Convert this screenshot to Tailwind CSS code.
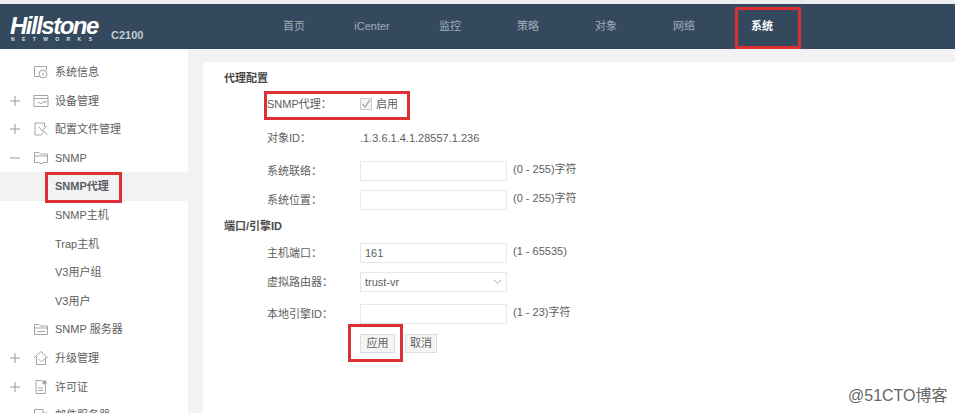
<!DOCTYPE html>
<html lang="zh-CN">
<head>
  <meta charset="UTF-8">
  <title>SNMP代理</title>
  <script src="https://cdn.jsdelivr.net/npm/@tailwindcss/browser@4"></script>
</head>
<body class="relative h-[413px] overflow-hidden bg-[#f2f2f5] text-[11px] text-[#5e5e5e] font-['Liberation_Sans','Noto_Sans_CJK_SC',sans-serif]">

  <!-- top bar -->
  <div class="h-[4px] bg-[#eceef0]"></div>
  <header class="flex h-[45px] bg-[#34495e] text-[#a0acb8]">
    <div class="w-[255px] shrink-0 relative">
      <div class="absolute left-[10px] top-[12px] text-[24px] leading-[19px] font-bold italic tracking-[-1.5px] text-white">Hillstone</div>
      <div class="absolute left-[11px] top-[32px] text-[5px] leading-[6px] font-bold tracking-[7.4px] text-[#dfe3e7]">NETWORKS</div>
      <div class="absolute left-[111px] top-[24px] text-[11px] leading-[14px] font-bold text-[#c5ccd3]">C2100</div>
    </div>
    <nav class="flex items-center">
      <span class="w-[78px] text-center">首页</span>
      <span class="w-[78px] text-center">iCenter</span>
      <span class="w-[78px] text-center">监控</span>
      <span class="w-[78px] text-center">策略</span>
      <span class="w-[78px] text-center">对象</span>
      <span class="w-[78px] text-center">网络</span>
      <span class="w-[78px] text-center font-bold text-white">系统</span>
    </nav>
  </header>

  <div class="flex h-[364px]">
    <!-- sidebar -->
    <aside class="w-[188px] shrink-0 bg-white pt-[9px]">
      <div class="flex h-[28.6px] items-center">
        <span class="w-[33px]"></span>
        <svg class="w-[16px] h-[14px] mr-[6px]" viewBox="0 0 16 14" fill="none" stroke="#a5a5a5"><path d="M13.5 5V1.5H1.5V11.5H6"/><circle cx="10" cy="9" r="4"/><path d="M10 8v3M10 6.5v.6"/></svg>
        <span>系统信息</span>
      </div>
      <div class="flex h-[28.6px] items-center">
        <svg class="ml-[10px] mr-[13px] h-[10px] w-[10px]" viewBox="0 0 10 10" stroke="#999"><path d="M0 5H10M5 0V10"/></svg>
        <svg class="w-[16px] h-[14px] mr-[6px]" viewBox="0 0 16 14" fill="none" stroke="#a5a5a5"><path d="M15 12.5H1V1.5H15V12.5zM1 4.5H15M5 8l3 2 3-3 1 2 2-2"/></svg>
        <span>设备管理</span>
      </div>
      <div class="flex h-[28.6px] items-center">
        <svg class="ml-[10px] mr-[13px] h-[10px] w-[10px]" viewBox="0 0 10 10" stroke="#999"><path d="M0 5H10M5 0V10"/></svg>
        <svg class="w-[16px] h-[14px] mr-[6px]" viewBox="0 0 16 14" fill="none" stroke="#a5a5a5"><path d="M11.5 5V1H2V13H8M6 5l3 4 5-5M8 13l3-4 3 4"/></svg>
        <span>配置文件管理</span>
      </div>
      <div class="flex h-[28.6px] items-center">
        <svg class="ml-[10px] mr-[13px] h-[10px] w-[10px]" viewBox="0 0 10 10" stroke="#999"><path d="M0 5H10"/></svg>
        <svg class="w-[16px] h-[14px] mr-[6px]" viewBox="0 0 16 14" fill="none" stroke="#a5a5a5"><path d="M1.5 11.5V1.5H6L7.5 3H14.5V11.5H10L8 13 6 11.5H1.5zM1.5 5H14.5"/></svg>
        <span>SNMP</span>
      </div>
      <div class="flex h-[28.6px] items-center bg-[#f2f2f5] pl-[55px] font-bold">SNMP代理</div>
      <div class="flex h-[28.6px] items-center pl-[55px]">SNMP主机</div>
      <div class="flex h-[28.6px] items-center pl-[55px]">Trap主机</div>
      <div class="flex h-[28.6px] items-center pl-[55px]">V3用户组</div>
      <div class="flex h-[28.6px] items-center pl-[55px]">V3用户</div>
      <div class="flex h-[28.6px] items-center">
        <span class="w-[33px]"></span>
        <svg class="w-[16px] h-[14px] mr-[6px]" viewBox="0 0 16 14" fill="none" stroke="#a5a5a5"><path d="M1.5 11.5V1.5H6L7.5 3H14.5V11.5H1.5zM1.5 5H14.5M4 8.5H12"/></svg>
        <span>SNMP 服务器</span>
      </div>
      <div class="flex h-[28.6px] items-center">
        <svg class="ml-[10px] mr-[13px] h-[10px] w-[10px]" viewBox="0 0 10 10" stroke="#999"><path d="M0 5H10M5 0V10"/></svg>
        <svg class="w-[16px] h-[16px] mr-[6px]" viewBox="0 0 16 16" fill="none" stroke="#a5a5a5"><path d="M1 8L8 1.5 15 8M3.5 7V14.5H12.5V7M5.5 9l3 3 4-4"/></svg>
        <span>升级管理</span>
      </div>
      <div class="flex h-[28.6px] items-center">
        <svg class="ml-[10px] mr-[13px] h-[10px] w-[10px]" viewBox="0 0 10 10" stroke="#999"><path d="M0 5H10M5 0V10"/></svg>
        <svg class="w-[16px] h-[16px] mr-[6px]" viewBox="0 0 16 16" fill="none" stroke="#a5a5a5"><path d="M9 1.5H3V14.5H12.5V6M5 9H10M5 11.5H10"/><circle cx="11.5" cy="3.5" r="1.8" fill="#a5a5a5"/></svg>
        <span>许可证</span>
      </div>
      <div class="flex h-[28.6px] items-center">
        <span class="w-[33px]"></span>
        <svg class="w-[16px] h-[14px] mr-[6px]" viewBox="0 0 16 14" fill="none" stroke="#a5a5a5"><path d="M1.5 13V1.5H10V5H14.5V13"/></svg>
        <span>邮件服务器</span>
      </div>
    </aside>

    <!-- main panel -->
    <main class="ml-[15px] mt-[13px] flex-1 bg-white pl-[21px] pt-[6px]">
      <div class="flex h-[20px] items-center font-bold text-[#4a4a4a]">代理配置</div>

      <div class="mt-[6px] ml-[43px] flex h-[20px] items-center">
        <span class="w-[93px]">SNMP代理：</span>
        <span class="mr-[4px] flex h-[12px] w-[12px] items-center justify-center border border-[#ccc] bg-[#f4f4f4]">
          <svg class="h-[10px] w-[10px]" viewBox="0 0 10 10" fill="none" stroke="#aaa" stroke-width="1.3"><path d="M1.5 5l2.5 3 5-7"/></svg>
        </span>
        <span>启用</span>
      </div>

      <div class="mt-[14px] ml-[43px] flex h-[20px] items-center">
        <span class="w-[93px]">对象ID：</span>
        <span>.1.3.6.1.4.1.28557.1.236</span>
      </div>

      <div class="mt-[13px] ml-[43px] flex h-[20px] items-center">
        <span class="w-[93px]">系统联络：</span>
        <input class="h-[20px] w-[147px] border border-[#e8e8e8] bg-white px-[5px] outline-none">
        <span class="ml-[6px] pb-[3px]">(0 - 255)字符</span>
      </div>

      <div class="mt-[9px] ml-[43px] flex h-[20px] items-center">
        <span class="w-[93px]">系统位置：</span>
        <input class="h-[20px] w-[147px] border border-[#e8e8e8] bg-white px-[5px] outline-none">
        <span class="ml-[6px] pb-[3px]">(0 - 255)字符</span>
      </div>

      <div class="mt-[6px] flex h-[20px] items-center font-bold text-[#4a4a4a]">端口/引擎ID</div>

      <div class="mt-[7px] ml-[43px] flex h-[20px] items-center">
        <span class="w-[93px]">主机端口：</span>
        <input value="161" class="h-[20px] w-[147px] border border-[#e8e8e8] bg-white px-[4px] text-[11px] text-[#5e5e5e] outline-none">
        <span class="ml-[6px] pb-[3px]">(1 - 65535)</span>
      </div>

      <div class="mt-[9px] ml-[43px] flex h-[20px] items-center">
        <span class="w-[93px]">虚拟路由器：</span>
        <div class="flex h-[20px] w-[147px] items-center justify-between border border-[#e8e8e8] bg-white pl-[4px] pr-[4px]">
          <span>trust-vr</span>
          <svg class="h-[6px] w-[9px]" viewBox="0 0 9 6" fill="none" stroke="#aaa"><path d="M1 1l3.5 3.5L8 1"/></svg>
        </div>
      </div>

      <div class="mt-[12px] ml-[43px] flex h-[20px] items-center">
        <span class="w-[93px]">本地引擎ID：</span>
        <input class="h-[20px] w-[147px] border border-[#e8e8e8] bg-white px-[5px] outline-none">
        <span class="ml-[6px] pb-[3px]">(1 - 23)字符</span>
      </div>

      <div class="mt-[10px] ml-[136px] flex gap-[10px]">
        <button class="h-[19px] w-[35px] border border-[#ddd] bg-[#f5f5f5] text-[11px] text-[#5e5e5e]">应用</button>
        <button class="h-[19px] w-[32px] border border-[#ddd] bg-[#f5f5f5] text-[11px] text-[#5e5e5e]">取消</button>
      </div>
    </main>
  </div>

  <!-- red annotation boxes -->
  <div class="absolute left-[735px] top-[7px] h-[42px] w-[66px] border-[3px] border-[#dc3035]"></div>
  <div class="absolute left-[45px] top-[172px] h-[31px] w-[77px] border-[3px] border-[#dc3035]"></div>
  <div class="absolute left-[264px] top-[91px] h-[29px] w-[146px] border-[3px] border-[#dc3035]"></div>
  <div class="absolute left-[348px] top-[324px] h-[38px] w-[55px] border-[3px] border-[#dc3035]"></div>

  <!-- watermark -->
  <div class="absolute left-[848px] top-[387px] text-[16px] leading-[18px] text-[#666]">@51CTO博客</div>
</body>
</html>
